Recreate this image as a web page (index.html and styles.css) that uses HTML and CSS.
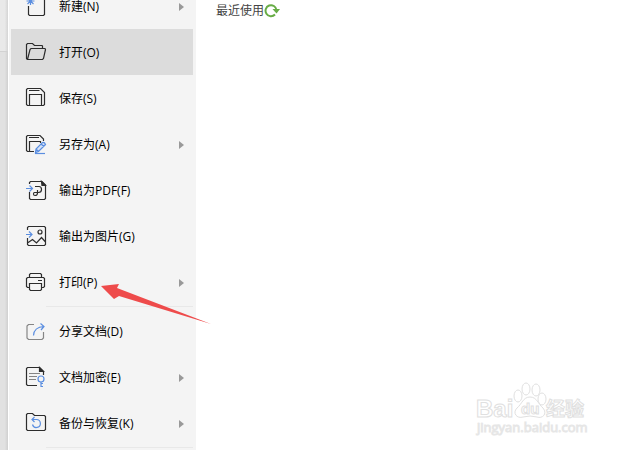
FILE: index.html
```html
<!DOCTYPE html>
<html lang="zh-CN">
<head>
<meta charset="utf-8">
<title>文件菜单</title>
<link rel="stylesheet" href="styles.css">
</head>
<body>
<div class="app">
  <div class="edge"><div class="edge-top"></div></div>
  <nav class="menu" aria-label="文件">
    <button class="item" type="button">
      <svg class="icon" viewBox="0 0 24 24"><path d="M12 2.500H19.500L20.500 3.500V20.500L19.500 21.500H5.500L4.500 20.500V12"/><path class="blue" d="M6.500 3V11M2.500 7H10.500M3.500 4L9.500 10M9.500 4L3.500 10"/></svg>
      <span class="label">新建(N)</span><span class="more"></span>
    </button>
    <button class="item current" type="button">
      <svg class="icon" viewBox="0 0 24 24"><path d="M3.500 19.500L2.500 18.500V4.500L3.500 3.500H8.500L10.500 5.500H18L18.500 6V8.500M3.500 19.500L6 9.500L7 8.500H21L21.500 9.500L19.500 18.500L18.500 19.500Z"/></svg>
      <span class="label">打开(O)</span>
    </button>
    <button class="item" type="button">
      <svg class="icon" viewBox="0 0 24 24"><path d="M3.500 2.500H16.500L20.500 6.500V18.500L19.500 19.500H3.500L2.500 18.500V3.500ZM5.500 19V8.500H17.500V19M5 4.500H15.500"/></svg>
      <span class="label">保存(S)</span>
    </button>
    <button class="item" type="button">
      <svg class="icon" viewBox="0 0 24 24"><path d="M10 19.500H3.500L2.500 18.500V4.500L3.500 3.500H16L19.500 7V9M5.500 19V9.500H16.500V11M5 5.500H15"/><path class="blue pencil" d="M11.500 20.500L12 17L18.500 10.500Q20.500 10 21.500 12.500L14.500 19.500ZM12 17L14.500 19.500M17 12L20 14.500"/><path class="blue" d="M11 21.500H21"/></svg>
      <span class="label">另存为(A)</span><span class="more"></span>
    </button>
    <button class="item" type="button">
      <svg class="icon" viewBox="0 0 24 24"><path d="M5.500 6V4.500L6.500 3.500H18L21.500 7V20.500L20.500 21.500H6.500L5.500 20.500V14M11 8.500H15Q17.500 8.500 17.500 11.500Q17.500 14.500 14.500 14.500H10.500Q9.500 14.500 9.500 16Q9.500 17.500 11 17.500Q13.500 17.500 13.500 15V12"/><path class="solid" d="M17.500 3.500L21.500 7.500H18Z"/><path class="blue" d="M2 10.500H8.500M5.500 7.500L8.500 10.500L5.500 13.500"/></svg>
      <span class="label">输出为PDF(F)</span>
    </button>
    <button class="item" type="button">
      <svg class="icon" viewBox="0 0 24 24"><path d="M3.500 6V3.500L4.500 2.500H20.500L21.500 3.500V20.500L20.500 21.500H4.500L3.500 20.500V14M3.500 19L8.500 15.500L12.500 19L17.500 13.500L21.500 18"/><circle cx="16" cy="8" r="2"/><path class="blue" d="M2 10.500H8M5 7.500L8 10.500L5 13.500"/></svg>
      <span class="label">输出为图片(G)</span>
    </button>
    <button class="item" type="button">
      <svg class="icon" viewBox="0 0 24 24"><path d="M5.500 7.500V4.500L6.500 3.500H16.500L17.500 4.500V7.500M5.500 17.500H3.500L2.500 16.500V8.500L3.500 7.500H19.500L20.500 8.500V16.500L19.500 17.500H17.500M5.500 13.500H17.500V19.500L16.500 20.500H6.500L5.500 19.500ZM14 10.500H18"/></svg>
      <span class="label">打印(P)</span><span class="more"></span>
    </button>
    <hr class="rule">
    <button class="item" type="button">
      <svg class="icon" viewBox="0 0 24 24"><path class="gray" d="M10 5.500H4.500L3 7V19L4.500 20.500H18L19.500 19V13"/><path class="blue" d="M9.500 16.500Q10 8 20 7.500M16.500 4.500L20 7.500L17 11"/></svg>
      <span class="label">分享文档(D)</span>
    </button>
    <button class="item" type="button">
      <svg class="icon" viewBox="0 0 24 24"><path d="M13 20.500H3.500L2.500 19.500V3.500L3.500 2.500H15.500L19.500 6.500V10"/><path class="solid" d="M15.500 2.500L19.500 6.500H15.500Z"/><path class="gray" d="M5 8.500H16M5 11.500H13M5 14.500H12"/><circle class="blue" cx="17" cy="14" r="3"/><path class="blue" d="M17 17V22M17 18.500H19M17 21.500H19"/></svg>
      <span class="label">文档加密(E)</span><span class="more"></span>
    </button>
    <button class="item" type="button">
      <svg class="icon" viewBox="0 0 24 24"><path d="M3.500 2.500H8.500L10.500 4.500H20.500L21.500 5.500V18.500L20.500 19.500H3.500L2.500 18.500V3.500Z"/><path class="blue" d="M8.500 8.500H12.500A4 4 0 1 1 8.500 13.500M10.500 6L8 8.500L10.500 11"/></svg>
      <span class="label">备份与恢复(K)</span><span class="more"></span>
    </button>
    <hr class="rule">
  </nav>
  <main class="recent">
    <h1 class="heading">最近使用</h1>
    <button class="refresh" type="button" aria-label="刷新">
      <svg viewBox="0 0 16 16"><path class="ring" d="M11 11.500A5.500 5.500 0 1 1 12.500 7"/><path class="tip" d="M8.500 6H16L12.500 10.500Z"/></svg>
    </button>
  </main>
</div>
<svg class="pointer" viewBox="0 0 112 44" aria-hidden="true"><path d="M1 5L19 3L17 7L111 43L19 15L14 18Z"/></svg>
<svg class="watermark" viewBox="0 0 116 60" role="img" aria-label="Baidu 经验">
  <text class="brand" x="3" y="37">Bai</text>
  <ellipse cx="45" cy="16" rx="4" ry="6"/>
  <ellipse cx="53" cy="9" rx="4" ry="6"/>
  <ellipse cx="63" cy="10" rx="4" ry="6"/>
  <ellipse cx="69" cy="19" rx="4" ry="6"/>
  <path d="M57 17C64 17 65 24 70 28C75 34 69 39 64 37Q57 35 50 37C44 39 39 33 44 28C49 24 50 17 57 17Z"/>
  <text class="du" x="48" y="34">du</text>
  <text class="cjk" x="73" y="36">经验</text>
  <text class="site" x="4" y="52">jingyan.baidu.com</text>
</svg>
</body>
</html>
```
FILE: styles.css
```css
* {
  box-sizing: border-box;
}

body {
  margin: 0;
  position: relative;
  height: 100vh;
  overflow: hidden;
  background: #fff;
  color: #000;
  font: 12px/16px "Open Sans", "Noto Sans CJK SC", sans-serif;
}

.app {
  display: flex;
  height: 100%;
}

.edge {
  flex: 0 0 8px;
  background: linear-gradient(to right, #e1e1e1 60%, #cfcfcf);
}

.edge-top {
  height: 52px;
  border-bottom: 1px solid #d2d2d2;
  background: linear-gradient(to right, #e9e9e9 60%, #d4d4d4);
}

.menu {
  flex: 0 0 188px;
  margin-top: -17px;
  padding: 0 3px 0 2px;
  border-left: 1px solid #fff;
  background: #f4f4f4;
}

.item {
  display: flex;
  align-items: center;
  gap: 11px;
  width: 100%;
  height: 46px;
  padding: 0 9px 0 13px;
  border: 0;
  background: none;
  color: inherit;
  font: inherit;
  text-align: left;
}

.current {
  background: #dcdcdc;
}

.label {
  flex: 1;
  white-space: nowrap;
}

.label,
.more {
  margin-top: 2px;
}

.more {
  border: 4px solid transparent;
  border-left: 5px solid #999;
  border-right: 0;
}

.icon {
  flex: none;
  width: 24px;
  height: 24px;
  fill: none;
  stroke: #2c2c2c;
  stroke-width: 1.2;
}

.icon .blue {
  stroke: #5b8ee0;
}

.icon .pencil {
  fill: #d5e3f8;
}

.icon .gray {
  stroke: #858585;
}

.icon .solid {
  fill: #303030;
}

.rule {
  height: 1px;
  margin: 1px 0 1px 35px;
  border: 0;
  background: #e8e8e8;
}

.recent {
  flex: 1;
  display: flex;
  align-items: flex-start;
  padding: 3px 20px;
}

.heading {
  margin: 0;
  color: #444;
  font: inherit;
}

.refresh {
  width: 16px;
  height: 16px;
  padding: 0;
  border: 0;
  background: none;
}

.refresh svg {
  display: block;
}

.ring {
  fill: none;
  stroke: #67ac45;
  stroke-width: 2;
}

.tip {
  fill: #67ac45;
}

.pointer {
  position: absolute;
  left: 100px;
  top: 281px;
  width: 112px;
  height: 44px;
  fill: #ee4b4b;
  pointer-events: none;
}

.watermark {
  position: absolute;
  right: 32px;
  bottom: 10px;
  width: 116px;
  height: 60px;
  fill: #fff;
  stroke: #e0e0e0;
  pointer-events: none;
}

.brand {
  font: bold 24px "Liberation Sans", sans-serif;
}

.du {
  font: bold 15px "Liberation Sans", sans-serif;
}

.cjk {
  font: bold 19px "Noto Sans CJK SC", sans-serif;
}

.site {
  font: 13px "Open Sans", sans-serif;
  stroke: #e6e6e6;
}
```
